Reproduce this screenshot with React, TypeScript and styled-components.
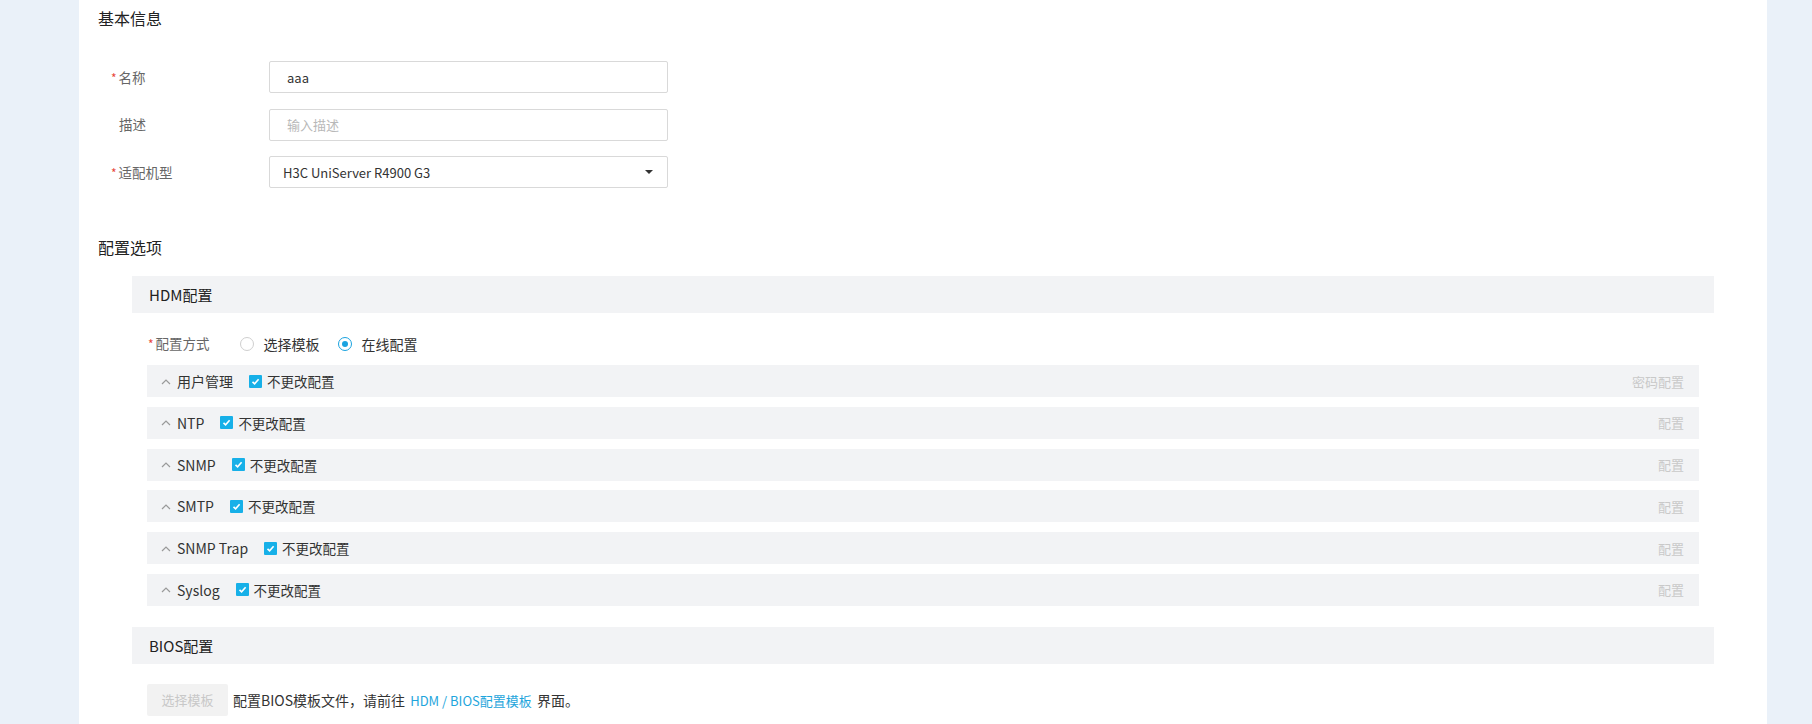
import styled, { createGlobalStyle } from 'styled-components';

const GlobalStyle = createGlobalStyle`
  html, body {
    margin: 0;
    padding: 0;
    background: #eaf1f9;
  }
  body {
    font-family: 'Noto Sans CJK SC', 'Noto Sans', sans-serif;
    font-size: 14px;
    color: #333;
  }
  * {
    box-sizing: border-box;
  }
`;

const modules = [
  { name: '用户管理', action: '密码配置' },
  { name: 'NTP', action: '配置' },
  { name: 'SNMP', action: '配置' },
  { name: 'SMTP', action: '配置' },
  { name: 'SNMP Trap', action: '配置' },
  { name: 'Syslog', action: '配置' },
];

const Chevron = () => (
  <svg width='10' height='7' viewBox='0 0 10 7'>
    <polyline points='1,6 5,2 9,6' fill='none' stroke='#9a9a9a' strokeWidth='1.2' />
  </svg>
);

const CheckMark = () => (
  <svg width='9' height='9' viewBox='0 0 9 9'>
    <polyline points='1.5,4.8 3.6,6.8 7.6,2.2' fill='none' stroke='#fff' strokeWidth='1.6' />
  </svg>
);

export default function App() {
  return (
    <Page>
      <GlobalStyle />
      <Panel>
        {/* Basic info */}
        <SectionTitle>基本信息</SectionTitle>
        <Form>
          <FormRow>
            <Label $required>名称</Label>
            <TextInput defaultValue='aaa' />
          </FormRow>
          <FormRow>
            <Label>描述</Label>
            <TextInput placeholder='输入描述' />
          </FormRow>
          <FormRow>
            <Label $required>适配机型</Label>
            <Select>
              <span>H3C UniServer R4900 G3</span>
              <Caret />
            </Select>
          </FormRow>
        </Form>

        {/* Config options */}
        <SectionTitle $top={48}>配置选项</SectionTitle>
        <Block>
          <BlockHeader>HDM配置</BlockHeader>
          <RadioRow>
            <Label $required $inline>配置方式</Label>
            <RadioGroup>
              <RadioItem>
                <Radio />
                选择模板
              </RadioItem>
              <RadioItem>
                <Radio $checked />
                在线配置
              </RadioItem>
            </RadioGroup>
          </RadioRow>
          <CollapseList>
            {modules.map((m) => (
              <CollapseRow key={m.name}>
                <CollapseLeft>
                  <Chevron />
                  <CollapseTitle>{m.name}</CollapseTitle>
                  <CheckLabel>
                    <CheckBox>
                      <CheckMark />
                    </CheckBox>
                    不更改配置
                  </CheckLabel>
                </CollapseLeft>
                <DisabledAction>{m.action}</DisabledAction>
              </CollapseRow>
            ))}
          </CollapseList>
        </Block>

        <Block $top={21}>
          <BlockHeader>BIOS配置</BlockHeader>
          <BiosRow>
            <DisabledButton disabled>选择模板</DisabledButton>
            <HintText>
              配置BIOS模板文件，请前往 <HintLink>HDM / BIOS配置模板</HintLink> 界面。
            </HintText>
          </BiosRow>
        </Block>
      </Panel>
    </Page>
  );
}

const Page = styled.div`
  display: flex;
  padding-left: 79px;
  height: 724px;
  overflow: hidden;
`;

const Panel = styled.div`
  width: 1688px;
  height: 100%;
  background: #fff;
  padding-top: 7px;
`;

const SectionTitle = styled.h2<{ $top?: number }>`
  margin: ${({ $top }) => $top ?? 0}px 0 0;
  padding-left: 19px;
  font-size: 16px;
  font-weight: 400;
  line-height: 22px;
  color: #222;
`;

// ------------------------------- Form ------------------------------- //
const Form = styled.div`
  margin-top: 32px;
  display: flex;
  flex-direction: column;
  gap: 15.5px;
`;

const FormRow = styled.div`
  display: flex;
  align-items: center;
  padding-left: 32px;
`;

const Label = styled.label<{ $required?: boolean; $inline?: boolean }>`
  width: ${({ $inline }) => ($inline ? 'auto' : '158px')};
  padding-left: ${({ $required }) => ($required ? 0 : 6)}px;
  font-size: 13.5px;
  color: #666;
  line-height: 22px;

  &::before {
    content: ${({ $required }) => ($required ? "'*'" : "''")};
    color: #e8483b;
    font-size: 12px;
    margin-right: 2px;
  }
`;

const TextInput = styled.input`
  width: 399px;
  height: 32px;
  border: 1px solid #d9d9d9;
  border-radius: 2px;
  padding: 0 17px;
  font-family: inherit;
  font-size: 13px;
  color: #333;
  outline: none;

  &::placeholder {
    color: #b8b8b8;
  }
`;

const Select = styled.div`
  width: 399px;
  height: 32px;
  border: 1px solid #d9d9d9;
  border-radius: 2px;
  padding: 0 14px 0 13px;
  display: flex;
  align-items: center;
  justify-content: space-between;
  font-size: 13px;
  color: #333;
`;

const Caret = styled.span`
  width: 0;
  height: 0;
  border-left: 4px solid transparent;
  border-right: 4px solid transparent;
  border-top: 4px solid #333;
`;

// ------------------------------- Blocks ------------------------------- //
const Block = styled.section<{ $top?: number }>`
  margin: ${({ $top }) => $top ?? 18}px 53px 0;
`;

const BlockHeader = styled.div`
  height: 37px;
  padding-left: 17px;
  display: flex;
  align-items: center;
  background: #f2f3f5;
  font-size: 15px;
  color: #222;
`;

const RadioRow = styled.div`
  margin-top: 19px;
  padding-left: 16px;
  display: flex;
  align-items: center;
  gap: 30px;
`;

const RadioGroup = styled.div`
  display: flex;
  align-items: center;
  gap: 18px;
`;

const RadioItem = styled.label`
  display: flex;
  align-items: center;
  gap: 10px;
  font-size: 14px;
  color: #333;
  line-height: 22px;
`;

const Radio = styled.span<{ $checked?: boolean }>`
  width: 14px;
  height: 14px;
  border-radius: 50%;
  border: 1px solid ${({ $checked }) => ($checked ? '#1aa3e0' : '#cfcfcf')};
  display: flex;
  align-items: center;
  justify-content: center;

  &::after {
    content: '';
    width: 6px;
    height: 6px;
    border-radius: 50%;
    background: ${({ $checked }) => ($checked ? '#1aa3e0' : 'transparent')};
  }
`;

const CollapseList = styled.div`
  margin: 10px 15px 0;
  display: flex;
  flex-direction: column;
  gap: 9.8px;
`;

const CollapseRow = styled.div`
  height: 32px;
  padding: 0 15px 0 14px;
  display: flex;
  align-items: center;
  justify-content: space-between;
  background: #f2f3f5;
`;

const CollapseLeft = styled.div`
  display: flex;
  align-items: center;
`;

const CollapseTitle = styled.span`
  margin-left: 6px;
  margin-right: 16px;
  font-size: 14px;
  color: #333;
`;

const CheckLabel = styled.span`
  display: flex;
  align-items: center;
  gap: 5px;
  font-size: 13.5px;
  color: #333;
`;

const CheckBox = styled.span`
  width: 13px;
  height: 13px;
  border-radius: 1px;
  background: #17b0e8;
  display: flex;
  align-items: center;
  justify-content: center;
`;

const DisabledAction = styled.span`
  font-size: 13px;
  color: #c9c9c9;
`;

const BiosRow = styled.div`
  margin: 20px 15px 0;
  display: flex;
  align-items: center;
  gap: 5px;
`;

const DisabledButton = styled.button`
  width: 81px;
  height: 32px;
  border: none;
  border-radius: 2px;
  background: #f2f2f2;
  color: #c8c8c8;
  font-family: inherit;
  font-size: 13px;
`;

const HintText = styled.span`
  font-size: 14px;
  color: #333;
`;

const HintLink = styled.a`
  color: #1ea5dc;
  font-size: 13px;
  margin: 0 2px;
  cursor: pointer;
`;
